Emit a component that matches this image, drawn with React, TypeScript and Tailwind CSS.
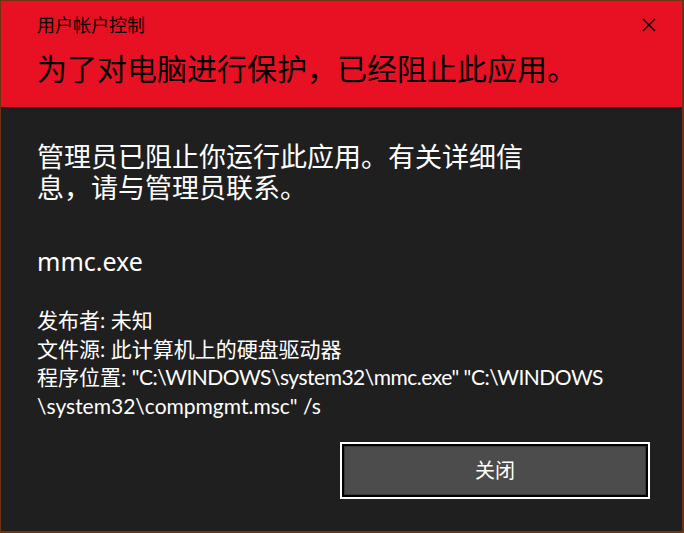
import React from "react";

const font = { fontFamily: '"Noto Sans", "Noto Sans CJK SC", sans-serif' };
const detailFont = { fontFamily: 'Lato, "Noto Sans CJK SC", sans-serif' };

export default function App() {
  return (
    <div
      className="w-[684px] h-[533px] flex flex-col border-l border-t border-r-2 border-b-2 border-[#6e3214] bg-[#1f1f1f] overflow-hidden"
      style={font}
    >
      <div className="h-[106px] bg-[#e81123] pl-[36px] pr-[24px] pt-[12px] flex flex-col">
        <div className="flex items-center justify-between">
          <div className="text-[18px] leading-[24px] text-black">用户帐户控制</div>
          <svg width="14" height="14" viewBox="0 0 14 14" className="mr-[2px]">
            <path d="M1 1 L13 13 M13 1 L1 13" stroke="#000" strokeWidth="1.3" fill="none" />
          </svg>
        </div>
        <div className="mt-[13px] text-[30px] leading-[38px] text-black">
          为了对电脑进行保护，已经阻止此应用。
        </div>
      </div>
      <div className="flex-1 flex flex-col pl-[36px] pr-[32px] text-white">
        <div className="pt-[34px] text-[27px] leading-[31px] w-[18.5em]">
          管理员已阻止你运行此应用。有关详细信息，请与管理员联系。
        </div>
        <div className="mt-[42px] text-[25px] leading-[32px]">mmc.exe</div>
        <div className="mt-[29px] text-[21px] leading-[28.5px]" style={detailFont}>
          <div>发布者: 未知</div>
          <div>文件源: 此计算机上的硬盘驱动器</div>
          <div>
            程序位置:{" "}
            <span className="tracking-[-0.5px]">"C:\WINDOWS\system32\mmc.exe" "C:\WINDOWS</span>
            <br />
            <span>\system32\compmgmt.msc" /s</span>
          </div>
        </div>
        <div className="mt-[22px] flex justify-end">
          <button className="w-[310px] h-[57px] border-2 border-white p-0 bg-transparent">
            <div className="w-full h-full border-2 border-black">
              <div className="w-full h-full border border-[#383838] bg-[#4c4c4c] flex items-center justify-center text-[20px] text-white">
                关闭
              </div>
            </div>
          </button>
        </div>
      </div>
    </div>
  );
}
